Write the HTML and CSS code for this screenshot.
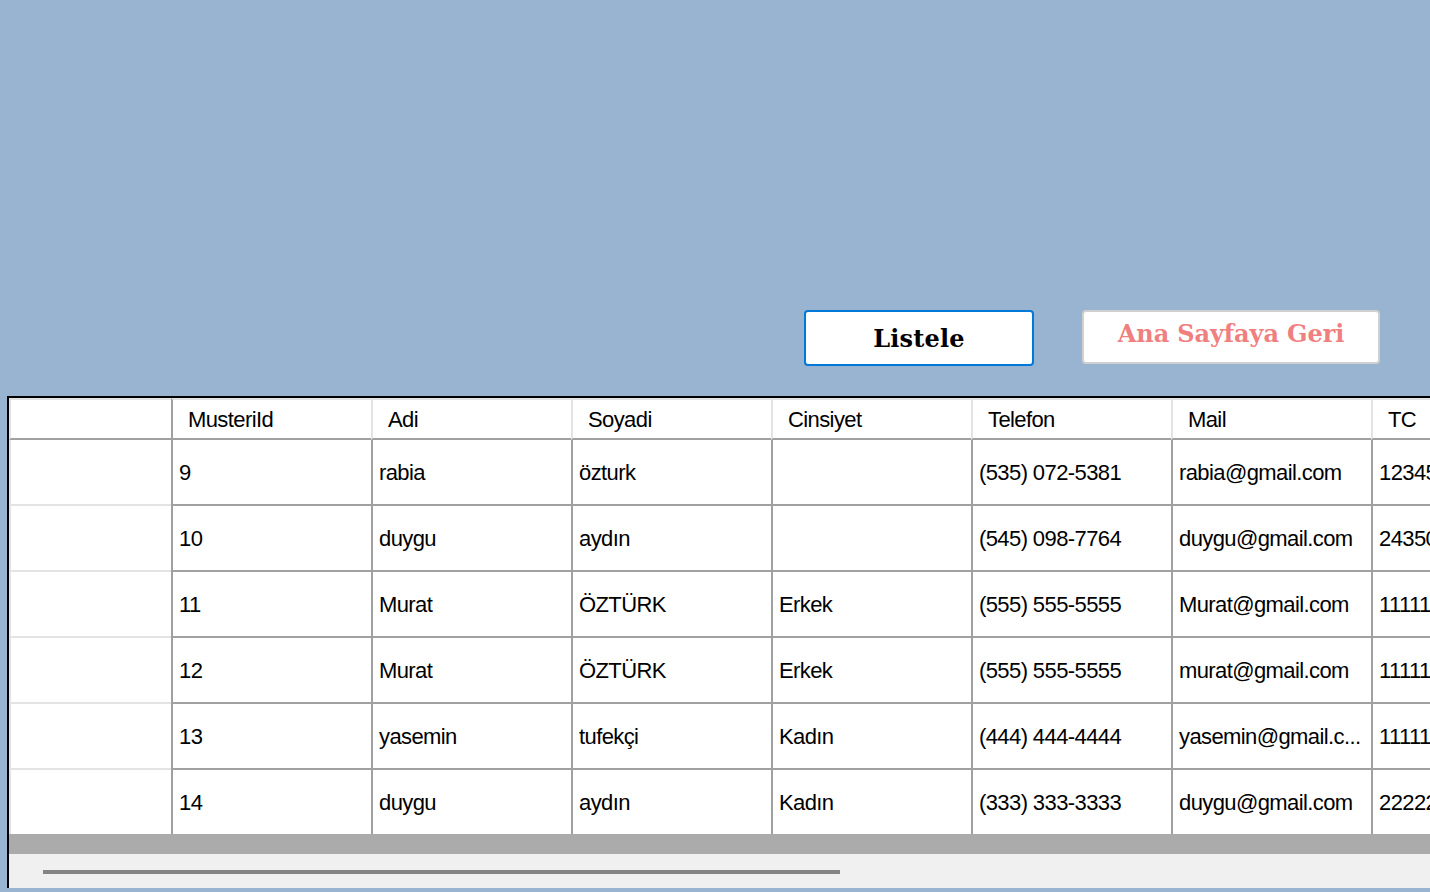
FILE: index.html
```html
<!DOCTYPE html>
<html lang="tr">
<head>
<meta charset="utf-8">
<title>Müşteri Listesi</title>
<link rel="stylesheet" href="styles.css">
</head>
<body>
<div class="form">
  <div class="toolbar">
    <button class="btn btn-list">Listele</button>
    <button class="btn btn-back">Ana Sayfaya Geri</button>
  </div>
  <div class="grid">
    <div class="rows">
      <div class="row head">
        <div class="rh"></div>
        <div class="c first">MusteriId</div>
        <div class="c">Adi</div>
        <div class="c">Soyadi</div>
        <div class="c">Cinsiyet</div>
        <div class="c">Telefon</div>
        <div class="c">Mail</div>
        <div class="c">TC</div>
      </div>
      <div class="row">
        <div class="rh"></div>
        <div class="c">9</div><div class="c">rabia</div><div class="c">özturk</div><div class="c"></div>
        <div class="c">(535) 072-5381</div><div class="c">rabia@gmail.com</div><div class="c">12345678901</div>
      </div>
      <div class="row">
        <div class="rh"></div>
        <div class="c">10</div><div class="c">duygu</div><div class="c">aydın</div><div class="c"></div>
        <div class="c">(545) 098-7764</div><div class="c">duygu@gmail.com</div><div class="c">24350000000</div>
      </div>
      <div class="row">
        <div class="rh"></div>
        <div class="c">11</div><div class="c">Murat</div><div class="c">ÖZTÜRK</div><div class="c">Erkek</div>
        <div class="c">(555) 555-5555</div><div class="c">Murat@gmail.com</div><div class="c">11111111111</div>
      </div>
      <div class="row">
        <div class="rh"></div>
        <div class="c">12</div><div class="c">Murat</div><div class="c">ÖZTÜRK</div><div class="c">Erkek</div>
        <div class="c">(555) 555-5555</div><div class="c">murat@gmail.com</div><div class="c">11111111111</div>
      </div>
      <div class="row">
        <div class="rh"></div>
        <div class="c">13</div><div class="c">yasemin</div><div class="c">tufekçi</div><div class="c">Kadın</div>
        <div class="c">(444) 444-4444</div><div class="c">yasemin@gmail.c...</div><div class="c">11111111111</div>
      </div>
      <div class="row last">
        <div class="rh"></div>
        <div class="c">14</div><div class="c">duygu</div><div class="c">aydın</div><div class="c">Kadın</div>
        <div class="c">(333) 333-3333</div><div class="c">duygu@gmail.com</div><div class="c">22222222222</div>
      </div>
    </div>
    <div class="band"></div>
    <div class="hscroll"><div class="thumb"></div></div>
  </div>
</div>
</body>
</html>
```

FILE: styles.css
```css
html, body {
  margin: 0;
  padding: 0;
  height: 100%;
  overflow: hidden;
  background: #99b4d1;
}

.form {
  width: 1430px;
  height: 892px;
  overflow: hidden;
  font-family: "Liberation Sans", Arial, sans-serif;
}

.toolbar {
  height: 396px;
  display: flex;
  align-items: flex-start;
  padding-left: 804px;
  box-sizing: border-box;
  gap: 48px;
}

.btn {
  background: #fff;
  font-family: "DejaVu Serif", "Liberation Serif", serif;
  font-weight: bold;
  font-size: 24px;
  border-radius: 4px;
  padding: 0;
  cursor: pointer;
}

.btn-list {
  margin-top: 310px;
  width: 230px;
  height: 56px;
  border: 2px solid #0078d7;
  color: #000;
  letter-spacing: 0.2px;
}

.btn-back {
  margin-top: 310px;
  width: 298px;
  height: 54px;
  border: 2px solid #d0d0d0;
  color: #f08080;
  padding-bottom: 8px;
  letter-spacing: -0.1px;
}

.grid {
  margin-left: 7px;
  width: 1500px;
  height: 492px;
  box-sizing: border-box;
  border: 2px solid #000;
  border-right: none;
  background: #ababab;
  display: flex;
  flex-direction: column;
}

.rows {
  display: flex;
  flex-direction: column;
}

.row {
  display: flex;
  height: 66px;
}

.row.head {
  height: 42px;
}

.rh {
  width: 162px;
  flex: none;
  box-sizing: border-box;
  background: #fff;
  border-left: 2px solid #e3e3e3;
  border-bottom: 2px solid #e3e3e3;
}

.head .rh {
  border-top: 2px solid #e3e3e3;
  border-bottom: 2px solid #a0a0a0;
}

.c {
  width: 200px;
  flex: none;
  box-sizing: border-box;
  background: #fff;
  border-left: 2px solid #a0a0a0;
  border-bottom: 2px solid #a0a0a0;
  display: flex;
  align-items: center;
  padding-left: 6px;
  padding-top: 2px;
  font-size: 22px;
  letter-spacing: -0.6px;
  color: #000;
  white-space: nowrap;
  overflow: hidden;
}

.head .c {
  border-top: 2px solid #e3e3e3;
  border-left-color: #e3e3e3;
  padding-left: 15px;
}

.head .c.first {
  border-left-color: #a0a0a0;
}

.row.last .c,
.row.last .rh {
  border-bottom: none;
  height: 64px;
}

.band {
  height: 18px;
  flex: none;
}

.hscroll {
  height: 34px;
  flex: none;
  background: #f0f0f0;
  position: relative;
}

.thumb {
  position: absolute;
  left: 34px;
  top: 16px;
  width: 797px;
  height: 4px;
  background: #858585;
}
```
